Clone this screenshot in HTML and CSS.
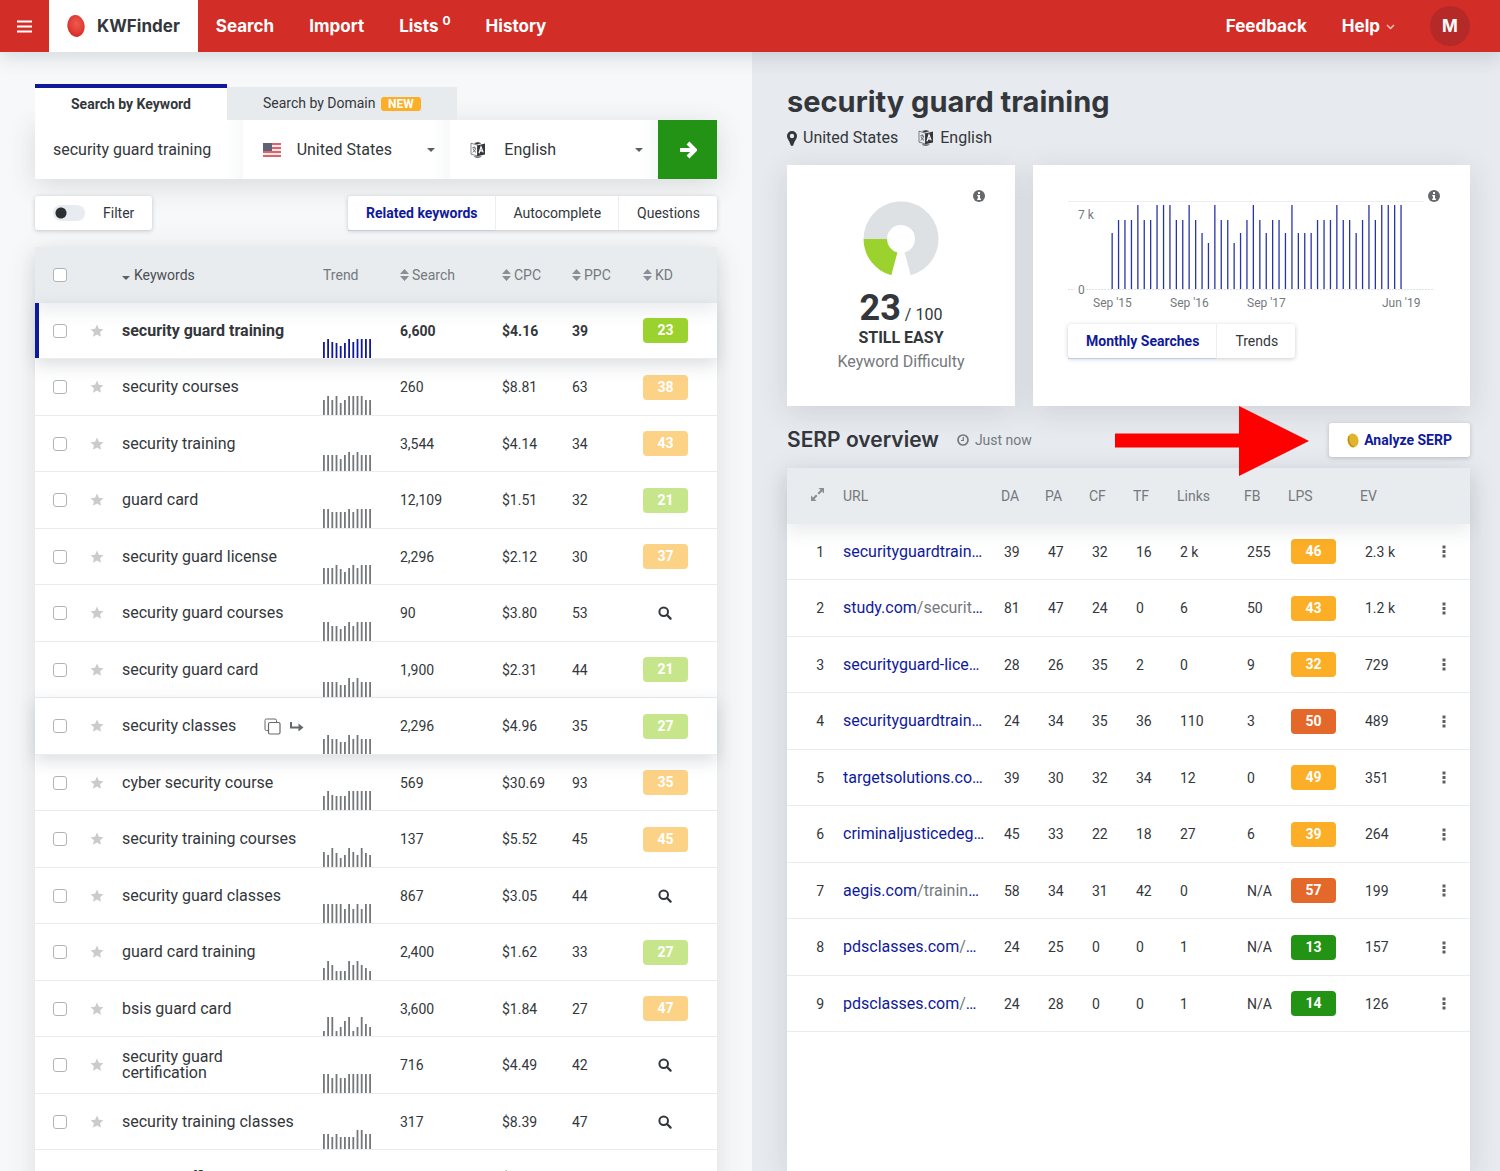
FILE: index.html
```html
<!DOCTYPE html>
<html lang="en">

	<head>
		<meta charset="UTF-8">
		<meta name="viewport" content="width=device-width, initial-scale=1">
		<title>KWFinder</title>
		<link rel="stylesheet" href="styles.css">
		<script src="script.js" defer></script>
	</head>

	<body>
		<!-- shared icons -->
		<svg class="sprite" aria-hidden="true">
			<symbol id="i-star" viewBox="0 0 14 14"><path d="M7 .6l1.9 4.1 4.5.5-3.3 3 .9 4.5L7 10.500l-4 2.200.9-4.500-3.300-3 4.500-.5z" /></symbol>
			<symbol id="i-sort" viewBox="0 0 9 12"><path d="M4.500 0L9 5H0zM4.500 12L0 7h9z" /></symbol>
			<symbol id="i-lens" viewBox="0 0 14 14"><circle cx="5.700" cy="5.700" r="4.300" fill="none" stroke="currentColor" stroke-width="2" /><path d="M9 9l3.600 3.600" stroke="currentColor" stroke-width="2.200" stroke-linecap="round" /></symbol>
			<symbol id="i-info" viewBox="0 0 12 12"><circle cx="6" cy="6" r="6" /><path fill="#fff" d="M5 2h2v2H5zM4.200 5H7v3.600h.9V10H4.200V8.600H5V6.300h-.8z" /></symbol>
			<symbol id="i-lang" viewBox="0 0 16 16">
				<path d="M7.500 3.200L1 1.200v11l6.500 1.700z" fill="none" stroke="currentColor" stroke-width=".6" />
				<path d="M7.200 3.500L15 1.600v10.800l-7.800 1.800z" />
				<path d="M4.500 1.200L8 .2l2.800 1.100-3.600.9zM4 14.500c2 1.400 5 1.400 7.500 0" fill="currentColor" stroke="currentColor" stroke-width=".4" />
				<path d="M2.500 5.500l3.600.8M4.300 4.400v1.400M5.500 6.500C5.200 8.300 4 9.800 2.600 10.300M3 6.500c.6 1.800 1.600 3 3 3.900" fill="none" stroke="currentColor" stroke-width=".7" />
				<path d="M9 11.300l2-6.500 2.200 5.600M9.800 9.200l2.700-.5" fill="none" stroke="#fff" stroke-width="1.200" />
			</symbol>
			<symbol id="i-dots" viewBox="0 0 4 13"><path d="M.5 .5h3v3h-3zM.5 5h3v3h-3zM.5 9.500h3v3h-3z" /></symbol>
		</svg>

		<header class="nav">
			<button class="nav-menu" type="button" aria-label="Menu"><svg width="15" height="13" viewBox="0 0 15 13"><path d="M0 1.500h15M0 6.500h15M0 11.500h15" stroke="#fff" stroke-width="2.200" /></svg></button>
			<a class="brand" href="#">
				<svg width="18" height="22" viewBox="0 0 18 22">
					<defs><radialGradient id="egg" cx=".55" cy=".4" r=".7"><stop offset="0" stop-color="#ee5a50" /><stop offset=".6" stop-color="#e03c33" /><stop offset="1" stop-color="#c9251f" /></radialGradient></defs>
					<ellipse cx="9" cy="11" rx="8.600" ry="11" fill="url(#egg)" transform="rotate(-8 9 11)" />
				</svg>
				KWFinder
			</a>
			<nav class="nav-links">
				<a href="#">Search</a>
				<a href="#">Import</a>
				<a href="#">Lists <sup>0</sup></a>
				<a href="#">History</a>
			</nav>
			<nav class="nav-links nav-right">
				<a href="#">Feedback</a>
				<a href="#">Help <svg width="9" height="6" viewBox="0 0 9 6"><path d="M1 1l3.500 3.500L8 1" fill="none" stroke="#f6c3bf" stroke-width="1.500" /></svg></a>
				<a class="avatar" href="#">M</a>
			</nav>
		</header>

		<main class="panels">
			<section class="left">
				<div class="tabs">
					<button class="tab active" type="button">Search by Keyword</button>
					<button class="tab" type="button">Search by Domain <span class="new">NEW</span></button>
				</div>
				<form class="search">
					<div class="field">
						<input type="text" value="security guard training" aria-label="Keyword">
					</div>
					<div class="field caret">
						<svg width="18" height="14" viewBox="0 0 18 14">
							<rect width="18" height="14" fill="#f7e9ea" />
							<path d="M0 1h18M0 5h18M0 9h18M0 13h18" stroke="#e0626a" stroke-width="2" />
							<rect width="9" height="8" fill="#5d6275" />
						</svg>
						<select aria-label="Location"><option>United States</option></select>
					</div>
					<div class="field caret">
						<svg width="16" height="16"><use href="#i-lang" width="16" height="16" /></svg>
						<select aria-label="Language"><option>English</option></select>
					</div>
					<button class="go" type="submit" aria-label="Search"><svg width="18" height="18" viewBox="0 0 18 18"><path d="M1 9h14M9 2l7 7-7 7" fill="none" stroke="#fff" stroke-width="4" /></svg></button>
				</form>
				<div class="toolbar">
					<label class="filter"><input type="checkbox">Filter</label>
					<div class="group">
						<button class="active" type="button">Related keywords</button>
						<button type="button">Autocomplete</button>
						<button type="button">Questions</button>
					</div>
				</div>
				<table class="keywords">
					<colgroup>
						<col class="c-check"><col class="c-star"><col><col class="c-trend"><col class="c-search"><col class="c-cpc"><col class="c-ppc"><col class="c-kd">
					</colgroup>
					<thead>
						<tr>
							<th><input type="checkbox" aria-label="Select all"></th>
							<th></th>
							<th class="sorted">Keywords</th>
							<th>Trend</th>
							<th><svg class="sort"><use href="#i-sort" /></svg>Search</th>
							<th><svg class="sort"><use href="#i-sort" /></svg>CPC</th>
							<th><svg class="sort"><use href="#i-sort" /></svg>PPC</th>
							<th><svg class="sort"><use href="#i-sort" /></svg>KD</th>
						</tr>
					</thead>
					<tbody id="keywords"></tbody>
				</table>
			</section>

			<section class="right">
				<h1>security guard training</h1>
				<p class="meta">
					<span><svg width="10" height="15" viewBox="0 0 10 15"><path fill-rule="evenodd" d="M5 0a5 5 0 0 1 5 5c0 2.500-2.500 5-3.700 9.200Q5 15.600 3.700 14.200C2.500 10 0 7.500 0 5a5 5 0 0 1 5-5zm0 2.800a2.200 2.200 0 1 0 0 4.400 2.200 2.200 0 0 0 0-4.400z" /></svg>United States</span>
					<span><svg width="16" height="16"><use href="#i-lang" /></svg>English</span>
				</p>
				<div class="cards">
					<div class="card difficulty">
						<svg class="info"><use href="#i-info" /></svg>
						<svg width="76" height="76" viewBox="-38 -38 76 76">
							<path fill="#dde1e4" d="M-37.500 0A37.500 37.500 0 1 1 9.700 36.200L3.600 13.500A14 14 0 1 0 -14 0z" />
							<path fill="#9bd22d" d="M-37.500 0A37.500 37.500 0 0 0 -9.700 36.200L-3.600 13.500A14 14 0 0 1 -14 0z" />
						</svg>
						<p class="score"><b>23</b> / 100</p>
						<p class="verdict">STILL EASY</p>
						<p class="caption">Keyword Difficulty</p>
					</div>
					<div class="card">
						<svg class="info"><use href="#i-info" /></svg>
						<svg class="chart" viewBox="0 0 367 110">
							<path d="M0 .5h356" stroke="#eceef0" />
							<path d="M0 88.500h7M18 88.500h348" stroke="#dfe2e5" stroke-dasharray="2 1" />
							<text x="10" y="18">7 k</text>
							<text x="10" y="93">0</text>
							<g id="months"></g>
							<text x="25" y="106">Sep '15</text>
							<text x="102" y="106">Sep '16</text>
							<text x="179" y="106">Sep '17</text>
							<text x="314" y="106">Jun '19</text>
						</svg>
						<div class="group">
							<button class="active" type="button">Monthly Searches</button>
							<button type="button">Trends</button>
						</div>
					</div>
				</div>
				<div class="serp-head">
					<h2>SERP overview</h2>
					<span class="updated"><svg width="12" height="12" viewBox="0 0 12 12"><circle cx="6" cy="6" r="5" fill="none" stroke="currentColor" stroke-width="1.700" /><path d="M6.300 3v3.500H4" fill="none" stroke="currentColor" stroke-width="1.200" /></svg>Just now</span>
					<svg class="pointer" width="194" height="70" viewBox="0 0 194 70"><path fill="#fd0000" d="M0 27.500h124V0l70 35-70 35V41.500H0z" /></svg>
					<button class="analyze" type="button"><svg width="12" height="15" viewBox="0 0 12 15"><ellipse cx="6" cy="7.500" rx="5.500" ry="7" fill="#e0b52c" transform="rotate(-8 6 7.500)" /><path d="M2 3c-1.600 4 .2 9.500 4.500 10.800" fill="none" stroke="#b98f1d" stroke-width="1.400" /></svg>Analyze SERP</button>
				</div>
				<div class="serp">
					<table>
						<colgroup>
							<col class="c-pos"><col><col class="c-num"><col class="c-num"><col class="c-num"><col class="c-num"><col class="c-links"><col class="c-num"><col class="c-lps"><col class="c-ev"><col class="c-more">
						</colgroup>
						<thead>
							<tr>
								<th class="pos"><svg width="13" height="13" viewBox="0 0 13 13"><path d="M7.500 0H13v5.500l-2-2L8 6.500 6.500 5l3-3zM5.500 13H0V7.500l2 2 3-3L6.500 8l-3 3z" /></svg></th>
								<th>URL</th>
								<th>DA</th>
								<th>PA</th>
								<th>CF</th>
								<th>TF</th>
								<th>Links</th>
								<th>FB</th>
								<th>LPS</th>
								<th>EV</th>
								<th></th>
							</tr>
						</thead>
						<tbody id="serp"></tbody>
					</table>
				</div>
			</section>
		</main>
	</body>

</html>
```

FILE: styles.css
```css
* {
	box-sizing: border-box;
}

body {
	margin: 0;
	height: 100vh;
	display: flex;
	flex-direction: column;
	overflow: hidden;
	font: 14px/20px Roboto, sans-serif;
	color: #33373b;
	background: #f7f8f9;
}

h1, h2, p {
	margin: 0;
}

button, input, select {
	font: inherit;
	color: inherit;
	border: none;
	background: none;
	padding: 0;
	margin: 0;
}

button {
	cursor: pointer;
}

svg {
	fill: currentColor;
	flex: none;
}

.sprite {
	position: absolute;
	width: 0;
	height: 0;
}

/* top bar */
.nav {
	position: relative;
	z-index: 5;
	display: flex;
	flex: none;
	height: 52px;
	background: #d32d28;
	color: #fff;
	font: 700 17px/52px Inter, sans-serif;
	box-shadow: 0 4px 20px rgba(60, 80, 100, .2);
}

.nav a {
	color: inherit;
	text-decoration: none;
}

.nav-menu {
	width: 49px;
	display: flex;
	align-items: center;
	justify-content: center;
}

.nav .brand {
	display: flex;
	align-items: center;
	gap: 12px;
	padding: 0 18px;
	background: #fff;
	color: #33373b;
}

.nav-links {
	display: flex;
	align-items: center;
	gap: 35px;
	padding-left: 18px;
}

.nav-links sup {
	font-size: 12px;
	line-height: 0;
}

.nav-right {
	margin-left: auto;
	padding-right: 30px;
}

.nav-links svg {
	margin-left: 2px;
	vertical-align: middle;
}

.nav-links .avatar {
	width: 40px;
	height: 40px;
	border-radius: 50%;
	background: #b52a28;
	line-height: 40px;
	text-align: center;
}

.panels {
	flex: 1;
	min-height: 0;
	display: grid;
	grid-template-columns: minmax(0, 752fr) minmax(0, 748fr);
}

.left, .right {
	min-height: 0;
	overflow: hidden;
	padding: 32px 35px 0;
}

/* search form */
.tabs {
	display: flex;
	align-items: flex-end;
}

.tab {
	height: 33px;
	padding: 0 36px;
	background: #e8ebee;
}

.tab.active {
	height: 36px;
	border-top: 4px solid #0f1a9b;
	background: #fff;
	font-weight: 700;
}

.new {
	margin-left: 2px;
	padding: 0 7px;
	border-radius: 3px;
	background: #fbae26;
	color: #fff;
	font-size: 12px;
	font-weight: 700;
}

.search {
	display: grid;
	grid-template-columns: 1fr 1fr 1fr 59px;
	height: 59px;
	background: #fff;
	box-shadow: 0 6px 28px rgba(50, 60, 75, .16);
}

.field {
	display: flex;
	align-items: center;
	gap: 16px;
	padding: 0 15px 0 20px;
	font-size: 16px;
	background: linear-gradient(to left, #f8f9fa, #fff 18px);
}

.field:first-child {
	padding: 0 18px;
}

.field input, .field select {
	width: 100%;
	min-width: 0;
	appearance: none;
	outline: none;
}

.field svg {
	width: 18px;
}

.caret::after {
	content: "";
	border: 4px solid transparent;
	border-top-color: #5c6064;
	border-bottom: 0;
}

.go {
	display: flex;
	align-items: center;
	justify-content: center;
	background: #239315;
}

.toolbar {
	display: flex;
	justify-content: space-between;
	margin: 17px 0;
}

.filter, .group, .analyze {
	display: flex;
	align-items: center;
	height: 34px;
	border-radius: 3px;
	background: #fff;
	box-shadow: 0 1px 4px rgba(40, 50, 65, .25);
}

.filter {
	gap: 18px;
	padding: 0 18px;
}

.filter input {
	appearance: none;
	width: 32px;
	height: 16px;
	border-radius: 8px;
	background: radial-gradient(circle at 8px 8px, #2c3035 5px, #e8ebef 6px);
}

.group {
	width: max-content;
}

.group button {
	height: 34px;
	padding: 0 17px 0 18px;
	border-left: 1px solid #eceef0;
}

.group button:first-child {
	border-left: 0;
}

.group .active, .analyze {
	color: #0f1a9b;
	font-weight: 700;
}

.group .active {
	box-shadow: 0 1px #c5caea;
}

/* tables */
table {
	width: 100%;
	table-layout: fixed;
	border-spacing: 0;
	background: #fff;
}

.keywords, .serp {
	box-shadow: 0 6px 28px rgba(50, 60, 75, .13);
}

thead tr {
	position: relative;
	height: 56px;
	background: #e8ecef;
	box-shadow: 0 8px 16px rgba(60, 70, 85, .1);
}

th {
	padding: 0;
	color: #75797d;
	font-weight: 400;
	text-align: left;
	white-space: nowrap;
}

td {
	height: 56px;
	padding: 0;
	border-bottom: 1px solid #eaecee;
}

tr:nth-child(even) td {
	height: 57px;
}

.c-check { width: 50px; }
.c-star { width: 37px; }
.c-trend { width: 77px; }
.c-search { width: 102px; }
.c-cpc { width: 70px; }
.c-ppc { width: 71px; }
.c-kd { width: 74px; }
.c-pos { width: 56px; }
.c-num { width: 44px; }
.c-links { width: 67px; }
.c-lps { width: 72px; }
.c-ev { width: 60px; }
.c-more { width: 50px; }

.sort {
	width: 9px;
	height: 12px;
	margin-right: 3px;
	vertical-align: -1px;
	color: #8b8f93;
}

.sorted {
	color: #4a4e52;
}

.sorted::before {
	content: "";
	display: inline-block;
	margin-right: 4px;
	border: 4px solid transparent;
	border-top-color: #5c6064;
	border-bottom: 0;
}

.keywords input {
	display: block;
	appearance: none;
	width: 14px;
	height: 14px;
	margin-left: 18px;
	border: 1px solid #b2b5b8;
	border-radius: 3px;
	background: #fff;
}

.star {
	display: block;
	width: 14px;
	height: 14px;
	margin-left: 5px;
	color: #c9cbcd;
}

.kw {
	display: flex;
	align-items: center;
	justify-content: space-between;
	padding-right: 19px;
	font-size: 16px;
	line-height: 16px;
}

.kw span {
	display: flex;
	gap: 9px;
	color: #66696c;
}

.trend {
	vertical-align: bottom;
}

.trend svg {
	display: block;
	color: #74777a;
}

.badge {
	display: block;
	width: 45px;
	height: 25px;
	border-radius: 4px;
	color: #fff;
	font-weight: 700;
	line-height: 25px;
	text-align: center;
}

.lime { background: #9bd22d; }
.orange { background: #fbae26; }
.rust { background: #e4682a; }
.green { background: #239315; }

.keywords .badge {
	opacity: .55;
}

.lens {
	display: block;
	width: 14px;
	height: 14px;
	margin-left: 15px;
}

.selected td {
	font-weight: 700;
}

.selected td:first-child {
	box-shadow: inset 4px 0 #0f1a9b;
}

.selected .trend svg {
	color: #0f1a9b;
}

.keywords .selected .badge {
	opacity: 1;
}

.selected, .hover {
	position: relative;
	box-shadow: 0 6px 16px rgba(60, 70, 85, .18);
}

/* right panel */
.right {
	display: flex;
	flex-direction: column;
	padding-right: 30px;
	background: #e7eaee;
}

h1 {
	font: 700 29px/36px Inter, sans-serif;
}

.meta {
	display: flex;
	gap: 20px;
	margin-top: 8px;
	font-size: 16px;
}

.meta span {
	display: flex;
	align-items: center;
	gap: 6px;
}

.cards {
	display: grid;
	grid-template-columns: 228fr 437fr;
	gap: 18px;
	margin: 17px 0;
}

.card {
	position: relative;
	padding: 36px 35px 32px;
	background: #fff;
	box-shadow: 0 6px 28px rgba(50, 60, 75, .13);
}

.info {
	position: absolute;
	top: 25px;
	right: 30px;
	width: 12px;
	height: 12px;
	color: #66696c;
}

.difficulty {
	padding: 36px 0 32px;
	text-align: center;
	font-size: 16px;
	line-height: 24px;
}

.difficulty svg {
	vertical-align: top;
}

.score {
	margin-top: 20px;
	line-height: 22px;
}

.score b {
	font-size: 36px;
}

.verdict {
	font-weight: 700;
}

.caption, .updated {
	color: #75797d;
}

.chart {
	display: block;
	width: 100%;
	margin-bottom: 13px;
	color: #75797d;
	font-size: 12px;
}

#months {
	fill: #2a35a5;
}

.serp-head {
	position: relative;
	z-index: 1;
	display: flex;
	align-items: center;
	gap: 18px;
	margin-bottom: 11px;
}

h2 {
	font: 600 21px/34px Inter, sans-serif;
}

.updated {
	display: flex;
	align-items: center;
	gap: 6px;
}

.pointer {
	position: absolute;
	right: 161px;
	top: -17px;
}

.analyze {
	gap: 5px;
	margin-left: auto;
	padding: 0 18px;
}

.serp {
	flex: 1;
	background: #fff;
}

.pos {
	padding-right: 19px;
	text-align: right;
}

th.pos {
	color: #8b8f93;
}

.serp td:nth-child(n+3) {
	padding-left: 3px;
}

.url {
	font-size: 16px;
	white-space: nowrap;
	color: #75797d;
}

.url a {
	color: #0f1a9b;
	text-decoration: none;
}

.serp td.ev:nth-child(n+3) {
	padding-left: 5px;
}

.more {
	display: block;
	margin-left: 19px;
	color: #5c6064;
}

.more svg {
	display: block;
	width: 4px;
	height: 13px;
}
```

FILE: script.js
```js
var keywords = [
	['security guard training', '6,600', '$4.16', 39, 23, [16, 19, 16, 15, 12, 15, 19, 16, 19, 19, 19, 19]],
	['security courses', '260', '$8.81', 63, 38, [15, 19, 15, 19, 12, 15, 19, 19, 19, 19, 15, 15]],
	['security training', '3,544', '$4.14', 34, 43, [16, 16, 16, 16, 12, 16, 19, 16, 19, 16, 16, 16]],
	['guard card', '12,109', '$1.51', 32, 21, [19, 19, 16, 16, 16, 16, 19, 16, 19, 19, 19, 19]],
	['security guard license', '2,296', '$2.12', 30, 37, [16, 16, 16, 19, 15, 12, 16, 19, 16, 19, 19, 19]],
	['security guard courses', '90', '$3.80', 53, 0, [19, 19, 15, 15, 12, 15, 19, 15, 19, 19, 19, 19]],
	['security guard card', '1,900', '$2.31', 44, 21, [15, 15, 15, 15, 12, 12, 19, 15, 19, 15, 15, 15]],
	['security classes', '2,296', '$4.96', 35, 27, [15, 19, 15, 15, 12, 12, 19, 15, 19, 15, 15, 15]],
	['cyber security course', '569', '$30.69', 93, 35, [14, 19, 15, 14, 14, 14, 19, 19, 19, 19, 19, 19]],
	['security training courses', '137', '$5.52', 45, 45, [15, 12, 19, 14, 9, 12, 19, 15, 12, 19, 14, 12]],
	['security guard classes', '867', '$3.05', 44, 0, [19, 19, 19, 19, 19, 14, 19, 14, 19, 14, 19, 19]],
	['guard card training', '2,400', '$1.62', 33, 27, [12, 19, 15, 9, 9, 9, 19, 15, 19, 15, 12, 9]],
	['bsis guard card', '3,600', '$1.84', 27, 47, [5, 19, 19, 5, 9, 15, 19, 5, 9, 19, 12, 9]],
	['security guard certification', '716', '$4.49', 42, 0, [19, 19, 15, 19, 15, 15, 19, 19, 19, 19, 19, 19]],
	['security training classes', '317', '$8.39', 47, 0, [15, 15, 12, 15, 12, 12, 12, 12, 19, 19, 15, 15]],
	['security officer training', '480', '$3.12', 38, 0, [15, 15, 12, 15, 12, 12, 15, 15, 19, 19, 15, 15]]
];

// [domain, path, DA, PA, CF, TF, links, FB, LPS, EV]
var serp = [
	['securityguardtrain…', '', 39, 47, 32, 16, '2 k', 255, 46, '2.3 k'],
	['study.com', '/securit', 81, 47, 24, 0, 6, 50, 43, '1.2 k'],
	['securityguard-lice…', '', 28, 26, 35, 2, 0, 9, 32, 729],
	['securityguardtrain…', '', 24, 34, 35, 36, 110, 3, 50, 489],
	['targetsolutions.co…', '', 39, 30, 32, 34, 12, 0, 49, 351],
	['criminaljusticedeg…', '', 45, 33, 22, 18, 27, 6, 39, 264],
	['aegis.com', '/trainin', 58, 34, 31, 42, 0, 'N/A', 57, 199],
	['pdsclasses.com', '/', 24, 25, 0, 0, 1, 'N/A', 13, 157],
	['pdsclasses.com', '/', 24, 28, 0, 0, 1, 'N/A', 14, 126]
];

// thousands of searches per month, Sep '15 - Jun '19
var months = '5666866888668654866456865665855566686656868888';
var monthHeight = { 4: 46, 5: 56, 6: 69, 8: 84 };

function icon(name, cls) {
	return '<svg class="' + cls + '"><use href="#i-' + name + '" /></svg>';
}

function badge(n) {
	var color = n < 15 ? 'green' : n < 30 ? 'lime' : n < 50 ? 'orange' : 'rust';
	return '<span class="badge ' + color + '">' + n + '</span>';
}

function spark(values) {
	var bars = values.map(function(h, i) {
		return '<rect x="' + (i * 4.2).toFixed(1) + '" y="' + (19 - h) + '" width="1.8" height="' + h + '" />';
	});
	return '<svg width="49" height="19">' + bars.join('') + '</svg>';
}

var actions = '<span>' +
	'<svg width="17" height="17" viewBox="0 0 17 17"><path d="M4 12.500H2.500a1.500 1.500 0 0 1-1.500-1.500V2.500A1.500 1.500 0 0 1 2.500 1H11a1.500 1.500 0 0 1 1.500 1.500V4" fill="none" stroke="currentColor" /><rect x="4.500" y="4.500" width="11.500" height="11.500" rx="1.500" fill="none" stroke="currentColor" stroke-width="1.200" /></svg>' +
	'<svg width="14" height="16" viewBox="0 0 14 16"><path d="M1 4v5.500h9" fill="none" stroke="currentColor" stroke-width="2" /><path d="M8.500 5.500l5 4-5 4z" /></svg>' +
	'</span>';

document.getElementById('keywords').innerHTML = keywords.map(function(k, i) {
	var cls = i == 0 ? 'selected' : i == 7 ? 'hover' : '';
	return '<tr class="' + cls + '">' +
		'<td><input type="checkbox" aria-label="' + k[0] + '"></td>' +
		'<td>' + icon('star', 'star') + '</td>' +
		'<td><div class="kw">' + k[0] + (i == 7 ? actions : '') + '</div></td>' +
		'<td class="trend">' + spark(k[5]) + '</td>' +
		'<td>' + k[1] + '</td>' +
		'<td>' + k[2] + '</td>' +
		'<td>' + k[3] + '</td>' +
		'<td>' + (k[4] ? badge(k[4]) : icon('lens', 'lens')) + '</td>' +
		'</tr>';
}).join('');

document.getElementById('serp').innerHTML = serp.map(function(s, i) {
	var link = s[1] ? '<a href="#">' + s[0] + '</a>' + s[1] + '<a href="#">…</a>' : '<a href="#">' + s[0] + '</a>';
	var nums = s.slice(2, 8).map(function(n) {
		return '<td>' + n + '</td>';
	}).join('');
	return '<tr><td class="pos">' + (i + 1) + '</td>' +
		'<td class="url">' + link + '</td>' + nums +
		'<td>' + badge(s[8]) + '</td>' +
		'<td class="ev">' + s[9] + '</td>' +
		'<td><button class="more" type="button" aria-label="More">' + icon('dots', '') + '</button></td></tr>';
}).join('');

document.getElementById('months').innerHTML = months.split('').map(function(m, i) {
	var h = monthHeight[m];
	return '<rect x="' + (43.5 + i * 6.42).toFixed(1) + '" y="' + (88 - h) + '" width="1.3" height="' + h + '" />';
}).join('');
```
